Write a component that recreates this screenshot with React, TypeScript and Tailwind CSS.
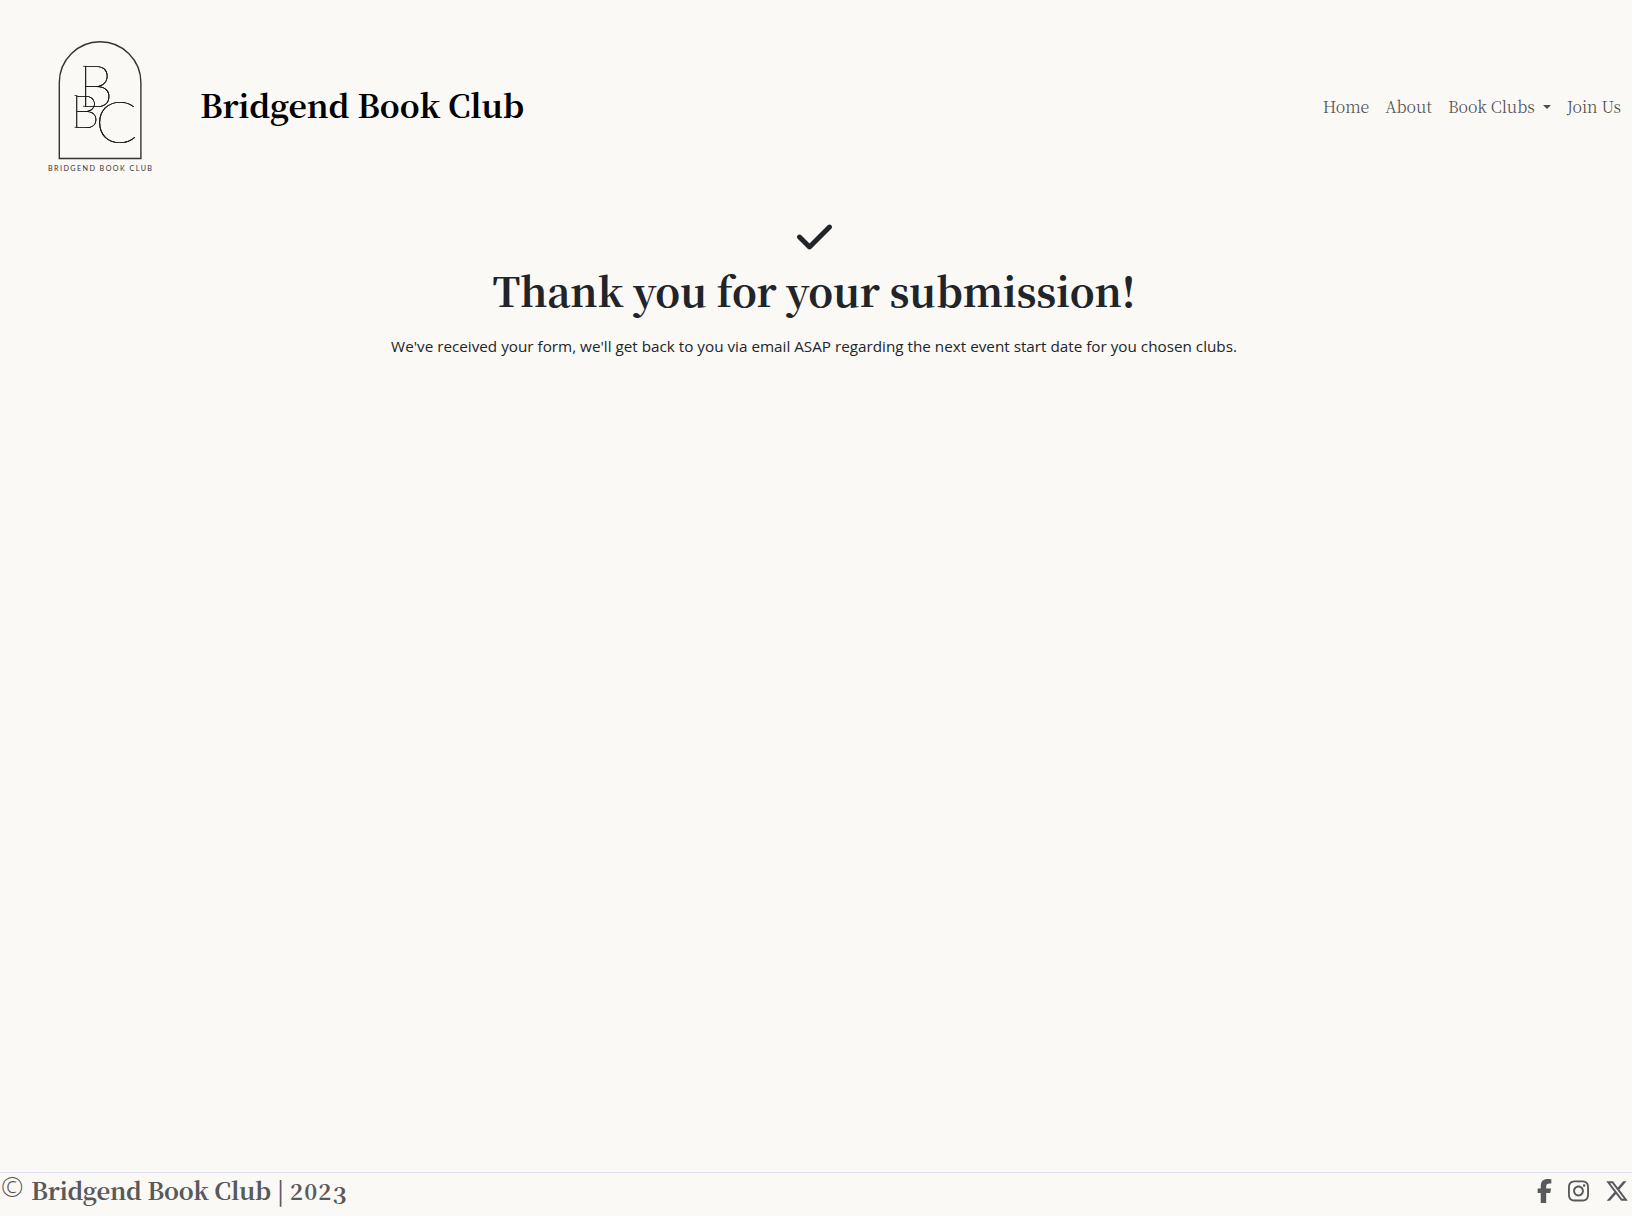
import { FaCheck, FaFacebookF, FaInstagram, FaXTwitter } from "react-icons/fa6";

/* Arched monogram: hairline letters whose verticals are thickened by a sideways shadow. */
function Logo() {
  return (
    <svg width="120" height="150" viewBox="40 31 120 150" className="shrink-0 font-['Lato']">
      <path d="M59.3 158.5V82.5a40.8 40.8 0 0 1 81.6 0V158.5Z" fill="none" stroke="#333" strokeWidth="1.4" />
      <g className="font-thin drop-shadow-[0.6px_0_0_#111]" fill="#111" stroke="#111" strokeWidth="0.2">
        <text x="79" y="106.5" fontSize="57.5" textLength="34" lengthAdjust="spacingAndGlyphs">B</text>
        <text x="71.3" y="127.5" fontSize="46" textLength="28" lengthAdjust="spacingAndGlyphs">B</text>
        <text x="95" y="142.8" fontSize="57" textLength="42.5" lengthAdjust="spacingAndGlyphs">C</text>
      </g>
      <path d="M83 66.3h3M83 106.3h3M74.5 95.5h3M74.5 127.3h3" stroke="#222" strokeWidth="0.8" />
      <text x="48" y="171" textLength="104" fontSize="7.2" fill="#333">
        BRIDGEND BOOK CLUB
      </text>
    </svg>
  );
}

export default function App() {
  return (
    <div className="flex min-h-screen flex-col bg-[#fbf9f6] font-['Noto_Serif_CJK_SC','DejaVu_Serif_Condensed',serif] text-[#212529]">
      <header className="flex h-[212px] items-center justify-between pr-[11px] pl-10">
        <a className="flex items-center gap-10">
          <Logo />
          <span className="mb-1 text-[32px] leading-10 font-bold tracking-[-0.15px] text-black">Bridgend Book Club</span>
        </a>
        <nav className="flex gap-4 pt-0.5 text-base leading-6 font-light tracking-[-0.05px] text-[#4d4e50]">
          <a>Home</a>
          <a>About</a>
          <a className="flex items-center">
            Book Clubs
            <span className="ml-2 border-x-4 border-t-4 border-x-transparent border-t-[#4d4e50]" />
          </a>
          <a>Join Us</a>
        </nav>
      </header>

      <main className="flex grow flex-col items-center pt-1 pr-1">
        <FaCheck className="mt-px h-10 w-[35px]" />
        <h1 className="mt-2 text-[40px] leading-[50px] font-bold tracking-[-0.2px]">
          Thank you for your submission!
        </h1>
        <p className="mt-[19px] font-['Open_Sans',sans-serif] text-[15.25px] leading-6">
          We've received your form, we'll get back to you via email ASAP regarding the next event start date for you
          chosen clubs.
        </p>
      </main>

      <footer className="flex h-11 items-start justify-between border-t border-[#dedeee] pr-[3px] text-[#58595b]">
        <div className="flex items-start text-2xl leading-8 font-bold tracking-[-0.3px] whitespace-pre">
          <span className="-mt-0.5 ml-px w-[30px] font-['Open_Sans',sans-serif] text-[27px] font-light">©</span>
          <span className="mt-px">
            Bridgend Book Club | <span className="text-[22px] leading-none tracking-[1.2px]">202</span>
            <span className="align-[-4px] text-2xl leading-none">3</span>
          </span>
        </div>
        <div className="mt-1.5 flex items-center gap-4 text-2xl">
          <FaFacebookF className="w-[15px]" />
          <FaInstagram className="w-[21px]" />
          <FaXTwitter className="w-6" />
        </div>
      </footer>
    </div>
  );
}
